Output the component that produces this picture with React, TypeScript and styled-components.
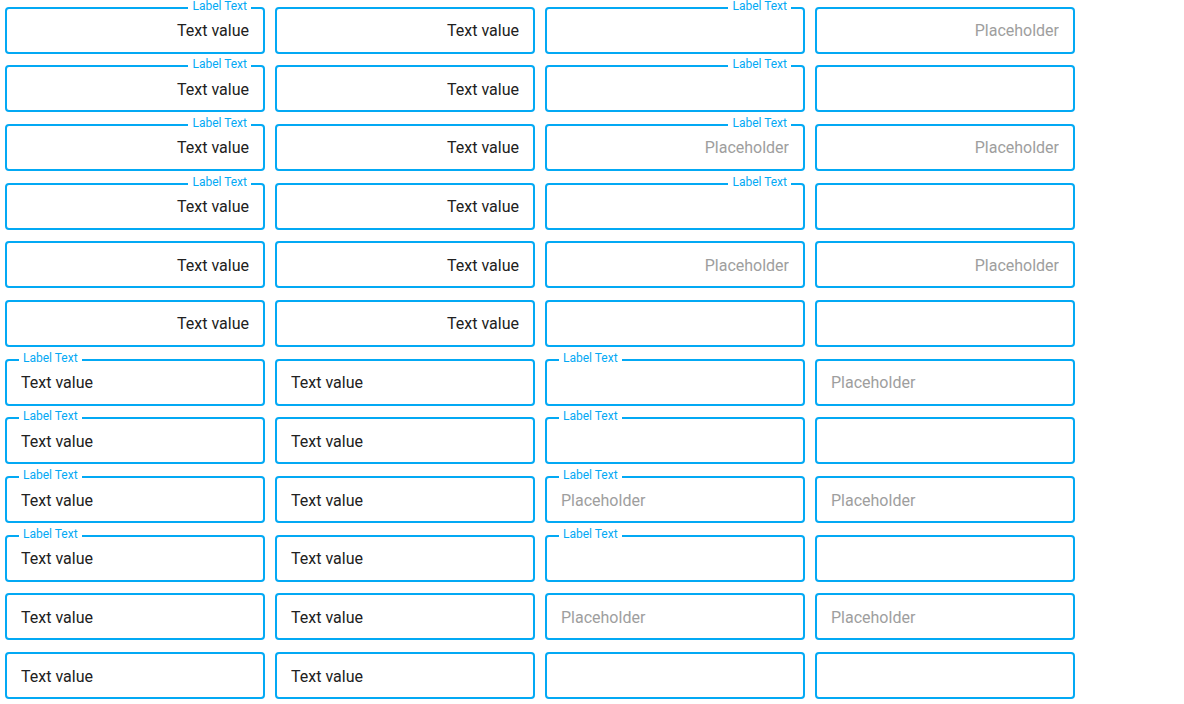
import React from "react";
import styled, { createGlobalStyle } from "styled-components";

type Align = "left" | "right";

interface FieldSpec {
  value?: string;
  placeholder?: string;
  label?: boolean;
}

const GlobalStyle = createGlobalStyle`
  html, body {
    margin: 0;
    padding: 0;
    background: #ffffff;
    font-family: Roboto, "Noto Sans", sans-serif;
  }
`;

// one block of six rows, reused for the right- and left-aligned halves
const rows: FieldSpec[][] = [
  [{ value: "Text value", label: true }, { value: "Text value" }, { label: true }, { placeholder: "Placeholder" }],
  [{ value: "Text value", label: true }, { value: "Text value" }, { label: true }, {}],
  [{ value: "Text value", label: true }, { value: "Text value" }, { label: true, placeholder: "Placeholder" }, { placeholder: "Placeholder" }],
  [{ value: "Text value", label: true }, { value: "Text value" }, { label: true }, {}],
  [{ value: "Text value" }, { value: "Text value" }, { placeholder: "Placeholder" }, { placeholder: "Placeholder" }],
  [{ value: "Text value" }, { value: "Text value" }, {}, {}],
];

const TextField = ({ spec, align }: { spec: FieldSpec; align: Align }): JSX.Element => {
  return (
    <Field>
      <Input
        $align={align}
        readOnly
        value={spec.value || ""}
        placeholder={spec.placeholder || ""}
      />
      {spec.label && <Label $align={align}>Label Text</Label>}
    </Field>
  );
};

const App = (): JSX.Element => {
  const aligns: Align[] = ["right", "left"];
  return (
    <>
      <GlobalStyle />
      <Grid>
        {aligns.map((align) =>
          rows.map((row, r) =>
            row.map((spec, c) => (
              <TextField key={`${align}-${r}-${c}`} spec={spec} align={align} />
            ))
          )
        )}
      </Grid>
    </>
  );
};

export default App;

const Grid = styled.div`
  display: grid;
  grid-template-columns: repeat(4, 260px);
  grid-auto-rows: 47px;
  column-gap: 10px;
  row-gap: 11.7px;
  padding: 6.5px 5px 0;
`;

const Field = styled.div`
  position: relative;
  height: 47px;
`;

const Input = styled.input<{ $align: Align }>`
  box-sizing: border-box;
  width: 100%;
  height: 100%;
  margin: 0;
  border: 2px solid #03a9f4;
  border-radius: 4px;
  background: #ffffff;
  outline: none;
  padding: ${({ $align }) => ($align === "right" ? "1px 14px 0 14px" : "1px 14px 0 14px")};
  text-align: ${({ $align }) => $align};
  font-family: Roboto, "Noto Sans", sans-serif;
  font-size: 16px;
  color: #212121;

  &::placeholder {
    color: #9e9e9e;
    opacity: 1;
  }
`;

const Label = styled.span<{ $align: Align }>`
  position: absolute;
  top: -8px;
  ${({ $align }) => ($align === "right" ? "right: 14px;" : "left: 14px;")}
  padding: 0 4px;
  background: #ffffff;
  color: #03a9f4;
  font-size: 12px;
  line-height: 14px;
  white-space: nowrap;
`;
